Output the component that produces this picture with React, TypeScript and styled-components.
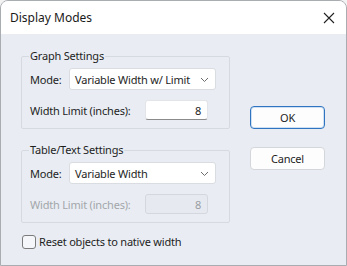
import React from "react";
import styled, { createGlobalStyle } from "styled-components";

const Global = createGlobalStyle`
  html, body { margin: 0; padding: 0; background: #f3f3f3; }
  body { font-family: "Segoe UI", "Noto Sans", "Open Sans", sans-serif; }
  * { box-sizing: border-box; }
`;

const UI_FONT = `"Noto Sans", "Liberation Sans", sans-serif`;

const Window = styled.div`
  width: 347px;
  height: 266px;
  border: 1px solid #a9acb0;
  border-radius: 8px 8px 0 0;
  overflow: hidden;
  display: flex;
  flex-direction: column;
  background: #e9edf3;
`;

const TitleBar = styled.div`
  height: 33px;
  background: #ffffff;
  display: flex;
  align-items: center;
  justify-content: space-between;
  padding: 0 11px 0 9px;
  flex-shrink: 0;
`;

const Title = styled.span`
  font-size: 12px;
  color: #1a1a1a;
`;

const CloseIcon = styled.svg`
  width: 12px;
  height: 12px;
  stroke: #222;
  stroke-width: 1.1;
`;

const Body = styled.div`
  flex: 1;
  display: flex;
  padding: 15px 0 0 20px;
  font-family: ${UI_FONT};
  font-size: 11px;
  letter-spacing: -0.2px;
  color: #1e1e1e;
`;

const LeftCol = styled.div`
  width: 209px;
  display: flex;
  flex-direction: column;
`;

const Group = styled.fieldset<{ $gapTop?: number }>`
  margin: ${(p) => p.$gapTop ?? 0}px 0 0 0;
  padding: 5px 11px 8px 8px;
  border: 1px solid #d5dae1;
  border-radius: 2px;
  display: flex;
  flex-direction: column;
  gap: 10px;
`;

const Legend = styled.legend`
  padding: 0 1px;
  margin-left: -1px;
  line-height: 14px;
  font-size: 11px;
  color: #1e1e1e;
`;

const Row = styled.div`
  display: flex;
  align-items: center;
  justify-content: space-between;
`;

const Label = styled.span<{ $disabled?: boolean }>`
  white-space: nowrap;
  color: ${(p) => (p.$disabled ? "#a3a6aa" : "#1e1e1e")};
`;

const Select = styled.div`
  width: 147px;
  height: 22px;
  margin-right: 2px;
  background: #fff;
  border: 1px solid #d9dce0;
  border-radius: 3px;
  display: flex;
  align-items: center;
  justify-content: space-between;
  padding: 0 6px 0 5px;
  font-size: 11px;
  white-space: nowrap;
  color: #1e1e1e;
`;

const Chevron = styled.svg`
  width: 9px;
  height: 9px;
  stroke: #6d6d6d;
  stroke-width: 1;
  fill: none;
`;

const NumInput = styled.div<{ $disabled?: boolean }>`
  width: 63px;
  height: 20px;
  margin-right: 10px;
  display: flex;
  align-items: center;
  justify-content: flex-end;
  padding-right: 6px;
  border-radius: 3px;
  background: ${(p) => (p.$disabled ? "#e6eaf0" : "#ffffff")};
  border: 1px solid ${(p) => (p.$disabled ? "#d4d8de" : "#e2e4e7")};
  border-bottom-color: ${(p) => (p.$disabled ? "#d4d8de" : "#8b8b8b")};
  color: ${(p) => (p.$disabled ? "#9a9da2" : "#1e1e1e")};
`;

const CheckRow = styled.label`
  display: flex;
  align-items: center;
  gap: 3px;
  margin-top: 11px;
  margin-left: 1px;
`;

const CheckBox = styled.span`
  width: 14px;
  height: 14px;
  border: 1px solid #7b7b7b;
  border-radius: 3px;
  background: #f4f6f9;
`;

const RightCol = styled.div`
  display: flex;
  flex-direction: column;
  gap: 18px;
  padding: 57px 0 0 20px;
`;

const Button = styled.button<{ $primary?: boolean }>`
  width: 75px;
  height: 23px;
  font-family: ${UI_FONT};
  font-size: 11px;
  letter-spacing: -0.2px;
  color: #1e1e1e;
  background: #fdfdfd;
  border: 1px solid ${(p) => (p.$primary ? "#2f74c0" : "#d3d6da")};
  box-shadow: ${(p) => (p.$primary ? "inset 0 0 0 1px #cfe0f3" : "none")};
  border-radius: 4px;
  padding: 0;
`;

const Check = () => (
  <Chevron viewBox="0 0 9 9">
    <path d="M1 3 L4.5 6.5 L8 3" />
  </Chevron>
);

export default function App() {
  return (
    <>
      <Global />
      <Window>
        <TitleBar>
          <Title>Display Modes</Title>
          <CloseIcon viewBox="0 0 12 12">
            <path d="M1 1 L11 11 M11 1 L1 11" />
          </CloseIcon>
        </TitleBar>
        <Body>
          <LeftCol>
            <Group>
              <Legend>Graph Settings</Legend>
              <Row>
                <Label>Mode:</Label>
                <Select>
                  <span>Variable Width w/ Limit</span>
                  <Check />
                </Select>
              </Row>
              <Row>
                <Label>Width Limit (inches):</Label>
                <NumInput>8</NumInput>
              </Row>
            </Group>
            <Group $gapTop={14}>
              <Legend>Table/Text Settings</Legend>
              <Row>
                <Label>Mode:</Label>
                <Select>
                  <span>Variable Width</span>
                  <Check />
                </Select>
              </Row>
              <Row>
                <Label $disabled>Width Limit (inches):</Label>
                <NumInput $disabled>8</NumInput>
              </Row>
            </Group>
            <CheckRow>
              <CheckBox />
              <span>Reset objects to native width</span>
            </CheckRow>
          </LeftCol>
          <RightCol>
            <Button $primary>OK</Button>
            <Button>Cancel</Button>
          </RightCol>
        </Body>
      </Window>
    </>
  );
}
